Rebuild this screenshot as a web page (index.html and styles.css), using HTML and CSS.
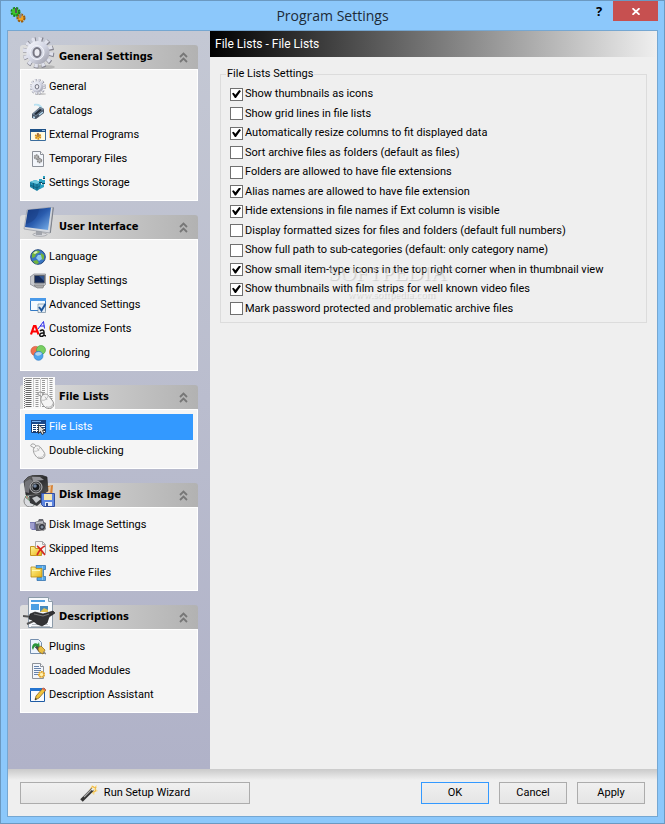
FILE: index.html
```html
<!DOCTYPE html>
<html lang="en">
<head>
  <meta charset="UTF-8">
  <meta name="viewport" content="width=device-width, initial-scale=1.0">
  <title>Program Settings</title>
  <link rel="stylesheet" href="styles.css">
</head>
<body>
  <svg class="defs" aria-hidden="true">
    <defs>
      <linearGradient id="silver" x1="0" y1="0" x2="1" y2="1">
        <stop offset="0" stop-color="#fafbff"/><stop offset="0.5" stop-color="#d3d6e4"/><stop offset="1" stop-color="#9696a2"/>
      </linearGradient>
      <linearGradient id="blue" x1="0" y1="0" x2="1" y2="1">
        <stop offset="0" stop-color="#0c2d72"/><stop offset="0.5" stop-color="#2a5cae"/><stop offset="1" stop-color="#7db4ee"/>
      </linearGradient>
      <linearGradient id="gold" x1="0" y1="0" x2="1" y2="1">
        <stop offset="0" stop-color="#fff79a"/><stop offset="1" stop-color="#e9b414"/>
      </linearGradient>
      <linearGradient id="black" x1="0" y1="0" x2="1" y2="1">
        <stop offset="0" stop-color="#777"/><stop offset="0.5" stop-color="#2c2c2e"/><stop offset="1" stop-color="#555"/>
      </linearGradient>
      <symbol id="gear" viewBox="0 0 32 32">
        <ellipse cx="21" cy="30" rx="11" ry="2" fill="#777" opacity="0.35"/>
        <circle cx="15.500" cy="15.700" r="13" fill="none" stroke="#84848f" stroke-width="5.500" stroke-dasharray="3.900 2.910"/>
        <circle cx="15" cy="15.200" r="13" fill="none" stroke="#dfe1ec" stroke-width="4.500" stroke-dasharray="3.300 3.510"/>
        <circle cx="15" cy="15.500" r="11.500" fill="url(#silver)"/>
        <circle cx="14" cy="15.500" r="7" fill="#d9dce8" stroke="#f3f4fa"/>
        <ellipse cx="14" cy="15.500" rx="3.500" ry="4.500" fill="#ececf2" stroke="#777783" stroke-width="2"/>
      </symbol>
      <symbol id="chevrons" viewBox="0 1 9 11">
        <path d="M1 6 4.500 2.500 8 6M1 11 4.500 7.500 8 11" fill="none" stroke="#777" stroke-width="1.800"/>
      </symbol>
      <symbol id="mouse" viewBox="0 0 16 16">
        <path d="M4 5C2 3 0 4 1 2s4-1 5 1" fill="none" stroke="#999" stroke-width="1"/>
        <path d="M4 5c2-3 5-3 7 0l3 4c3 5-2 8-6 6C5 13 2 8 4 5z" fill="#f4f4f4" stroke="#8b8b8b" stroke-width=".8"/>
        <path d="M4 8c3 1 5-1 6-4M7 5l2 3" fill="none" stroke="#aaa" stroke-width=".7"/>
        <path d="M8 14c3 1 6 0 6-3" fill="none" stroke="#bbb"/>
      </symbol>
      <symbol id="page" viewBox="0 0 16 16">
        <path d="M2.500.5h8l3 3v12h-11z" fill="#f3f6fb" stroke="#8c9199"/>
        <path d="M10.500.5v3h3" fill="#fff" stroke="#8c9199"/>
      </symbol>
    </defs>
  </svg>

  <div class="window">
    <header class="titlebar">
      <svg class="app-icon" viewBox="0 0 16 16">
        <circle cx="5.500" cy="5" r="3.800" fill="#35b52a" stroke="#178215" stroke-width="2.500" stroke-dasharray="2 1"/>
        <circle cx="5" cy="4.500" r="3" fill="#3fc62e"/>
        <path d="M5 1h2v5H5z" fill="#555"/>
        <circle cx="11" cy="11" r="3.300" fill="#e8961a" stroke="#9c5c0b" stroke-width="2.500" stroke-dasharray="2 1"/>
        <circle cx="11" cy="11" r="2.500" fill="#f0a426"/>
        <path d="M9 7h3l-1 4H9z" fill="#888"/>
      </svg>
      <h1>Program Settings</h1>
      <div class="window-buttons">
        <button class="help" type="button" aria-label="Help">?</button>
        <button class="close" type="button" aria-label="Close">
          <svg width="8" height="7" viewBox="0 0 8 7"><path d="M.5.2 7.500 6.800M7.500.2.5 6.800" stroke="#fff" stroke-width="1.800"/></svg>
        </button>
      </div>
    </header>

    <div class="client">
      <div class="panes">
        <nav class="sidebar">
          <section class="group">
            <button class="group-head" type="button">
              <svg class="group-icon" viewBox="0 0 32 32"><use href="#gear"/></svg>
              <span>General Settings</span>
              <svg class="chevrons"><use href="#chevrons"/></svg>
            </button>
            <ul>
              <li><a href="#"><svg viewBox="0 0 16 16"><use href="#gear"/></svg>General</a></li>
              <li><a href="#"><svg viewBox="0 0 16 16">
                <path d="M4 1c5-1 8 1 9 5l-3-1C9 3 7 2 4 3z" fill="#b9e1f1"/>
                <path d="M2 11 10 4l4 2v4l-8 6-4-1z" fill="#465263"/>
                <path d="m2 11 8-7 4 2-8 7z" fill="#76899d"/>
                <path d="m4 11 6-5 2 1-6 5z" fill="#202a36"/>
                <path d="m3 14 2 .500M9 12l4-3" stroke="#b5d9ef" stroke-width="1.500"/>
              </svg>Catalogs</a></li>
              <li><a href="#"><svg viewBox="0 0 16 16">
                <path d="M.5 2.500h15v11H.5z" fill="#fffbe0" stroke="#3a6c9c"/>
                <path d="M0 2h16v3H0z" fill="#1d5187"/>
                <path d="M12 3.500h3" stroke="#9cc5ea"/>
                <circle cx="8" cy="9.500" r="2.300" fill="#f4c542" stroke="#d18c1b" stroke-width="2" stroke-dasharray="1.500 .7"/>
                <path d="M8 6v4" stroke="#744"/>
              </svg>External Programs</a></li>
              <li><a href="#"><svg viewBox="0 0 16 16">
                <use href="#page"/>
                <circle cx="6.500" cy="6" r="2" fill="#bbb" stroke="#888" stroke-width="1.500" stroke-dasharray="1.500 .5"/>
                <circle cx="9.500" cy="9.500" r="2" fill="#bbb" stroke="#888" stroke-width="1.500" stroke-dasharray="1.500 .5"/>
              </svg>Temporary Files</a></li>
              <li><a href="#"><svg viewBox="0 0 16 16">
                <path d="m0 7 5-2 6 2v6l-4 3-7-4z" fill="#1c86aa"/>
                <path d="m0 7 5-2 6 2-4 2z" fill="#6ec9df"/>
                <path d="M7 9v6M3.500 8v6M0 10l7 3 4-3" fill="none" stroke="#0b5673" stroke-width=".7"/>
                <path d="M9 4h3v3H9zM13 1h2v2h-2zM12 5h3v3h-3zM10 10l4-1v3l-4 2z" fill="#29a1c1"/>
                <path d="M13 3h2v1h-2zM9 7h3v1H9zM12 8h3v1h-3z" fill="#0b465f"/>
              </svg>Settings Storage</a></li>
            </ul>
          </section>

          <section class="group">
            <button class="group-head" type="button">
              <svg class="group-icon" viewBox="0 0 32 32">
                <ellipse cx="17" cy="27.500" rx="7" ry="1.800" fill="#d9dade" stroke="#8e9096" stroke-width=".6"/>
                <path d="m13 23 6 1v4h-6z" fill="#a1a4ab"/>
                <path d="m4 3 26-3-3 26L1 22z" fill="#d5d8de" stroke="#8a8e98" stroke-width=".6"/>
                <path d="m5 3 23-2.500L25 23 2 20z" fill="url(#blue)"/>
                <path d="M5 3 16 2C15 10 11 15 3 17z" fill="#1c438b" opacity=".6"/>
                <path d="m30 0 .8 1-3 25-.8-.5z" fill="#777b84"/>
              </svg>
              <span>User Interface</span>
              <svg class="chevrons"><use href="#chevrons"/></svg>
            </button>
            <ul>
              <li><a href="#"><svg viewBox="0 0 16 16">
                <circle cx="8" cy="8" r="7.300" fill="#3975c2" stroke="#23487e"/>
                <path d="M2 5c2-4 6-4 8-3l-1 2-3 1-1 3-3 1zM11 4l3 2v4l-2 1-2-3zM3 12l4-1 2 3-2 1c-2 0-3-1-4-3z" fill="#72b43b"/>
                <path d="m3 4 3-2 2 1-3 2z" fill="#e1f3bd"/>
                <path d="M8 6h3l1 4-3 2-3-3z" fill="#8cc8f2"/>
              </svg>Language</a></li>
              <li><a href="#"><svg viewBox="0 0 16 16">
                <path d="m0 4 4-3h11.500v10.500l-3 2.500H5L0 11z" fill="#c6c8cc" stroke="#7c7f86" stroke-width=".7"/>
                <path d="M4.500 2.500h10V10h-10z" fill="#142a59" stroke="#60656e"/>
                <path d="m9 3 5 0v5z" fill="#31558f"/>
                <path d="m4 12 10 0-1 3H7z" fill="#aaa" stroke="#777" stroke-width=".6"/>
              </svg>Display Settings</a></li>
              <li><a href="#"><svg viewBox="0 0 16 16">
                <path d="M.5 1.500h15v12H.5z" fill="#f5faff" stroke="#3379c4"/>
                <path d="M0 1h16v3H0z" fill="#4a9ae9"/>
                <path d="M8 7h7.500v8.500H8z" fill="#e5edf5" stroke="#71899e" stroke-width=".7"/>
                <path d="m9 10 2.500 3.500L15.500 7" fill="none" stroke="#1c559a" stroke-width="2"/>
              </svg>Advanced Settings</a></li>
              <li><a href="#"><svg viewBox="0 0 16 16">
                <path d="M1 13.500 4 5h1.500l3 8.500M2.500 10.500h5" fill="none" stroke="#f00" stroke-width="2.200"/>
                <path d="m8 8 5.500-7.500 1 7M10 5h4.500" fill="none" stroke="#2929ea" stroke-width="1"/>
                <path d="M10 10c2-2 4-1 4 1v4M14 12c-6-1-5 5-1 3l1-1 2 1" fill="none" stroke="#111" stroke-width="1.500"/>
              </svg>Customize Fonts</a></li>
              <li><a href="#"><svg viewBox="0 0 16 16">
                <circle cx="5.500" cy="6" r="4.600" fill="#ef704d" stroke="#c84c30" stroke-width=".6"/>
                <circle cx="11" cy="5" r="4.500" fill="#79cf62" stroke="#43a43a" stroke-width=".6"/>
                <circle cx="8.500" cy="10.800" r="4.500" fill="#4da5ed" stroke="#2472c1" stroke-width=".6"/>
                <path d="M5 9c1-2 4-3 7-1-1 3-5 4-7 1z" fill="#b2d5ee"/>
              </svg>Coloring</a></li>
            </ul>
          </section>

          <section class="group">
            <button class="group-head" type="button">
              <svg class="group-icon" viewBox="0 0 32 32">
                <path d="M0 0h32v32H0z" fill="#fafafa"/>
                <path d="M2 1.500h28" stroke="#999" stroke-dasharray="7 1"/>
                <path d="M5.500 3v27" stroke="#666" stroke-width="6" stroke-dasharray="1 1"/>
                <path d="M14 3v27M20.500 3v27M28 3v27" stroke="#999" stroke-width="3" stroke-dasharray="1 1"/>
                <path d="M10.500 2v28M17.500 2v28M24.500 2v28" stroke="#ccc"/>
                <path d="M1.500 2v29" stroke="#777" stroke-dasharray="1 1"/>
                <svg x="14" y="14" width="18" height="18"><use href="#mouse"/></svg>
              </svg>
              <span>File Lists</span>
              <svg class="chevrons"><use href="#chevrons"/></svg>
            </button>
            <ul>
              <li><a class="selected" href="#" aria-current="page"><svg viewBox="0 0 16 16">
                <path d="M1.500 1.500h14v12h-14z" fill="#fff" stroke="#163b76"/>
                <path d="M1 1h15v4H1z" fill="#1a4788"/>
                <path d="M2 2.500h9" stroke="#78b1f1"/>
                <path d="M3 6.500h3m1 0h8M3 8.500h3m1 0h8M3 10.500h3m1 0h8M3 12.500h3m1 0h4" stroke="#183d72"/>
                <path d="M8.500 5.500v9l2-2 1.500 3 2-1-1.500-3h2.500z" fill="#ddd" stroke="#222" stroke-width=".8"/>
              </svg>File Lists</a></li>
              <li><a href="#"><svg viewBox="0 0 16 16"><use href="#mouse"/></svg>Double-clicking</a></li>
            </ul>
          </section>

          <section class="group">
            <button class="group-head" type="button">
              <svg class="group-icon" viewBox="0 0 32 32">
                <circle cx="7" cy="26" r="6" fill="#dadce0" stroke="#888"/>
                <path d="M7 26 2 22l2-2zM7 26l5 4" stroke="#6a9b76" fill="#dc8888"/>
                <path d="m20 12 10-2-1 12-10 1z" fill="#d98436"/>
                <path d="m22 13 6-2-1 8-5 1z" fill="#eac39a"/>
                <path d="M1 6 5 2l6-2h7l6 2 1 14-5 3-17 1z" fill="url(#black)" stroke="#222" stroke-width=".6"/>
                <path d="m2 7 5-3 3 2-3 3-1 9-4-1z" fill="#747478"/>
                <path d="m9 2 8 0 4 3-11 1z" fill="#949499"/>
                <circle cx="13" cy="12" r="6" fill="#494a4e" stroke="#b7b7ba"/>
                <circle cx="13" cy="12" r="4" fill="#17191d" stroke="#88898c"/>
                <circle cx="12" cy="11" r="1.800" fill="#6f819d"/>
                <path d="m6 21 12-2 3 6-7 6-7-3z" fill="#36373a"/>
                <path d="m9 23 5-2 4 3-5 4z" fill="#c3c6ca"/>
                <path d="M18.500 18.500h13v13h-11l-2-2z" fill="#5c85df" stroke="#344e9d"/>
                <path d="M21 19h8v6h-8z" fill="#f5e6ae"/>
                <path d="M22 27h7v4h-7z" fill="#e6eaf4"/><path d="M23 28h2v3h-2z" fill="#314c8d"/>
              </svg>
              <span>Disk Image</span>
              <svg class="chevrons"><use href="#chevrons"/></svg>
            </button>
            <ul>
              <li><a href="#"><svg viewBox="0 0 16 16">
                <path d="M0 5h6v8H2l-2-2z" fill="#7677b0"/><path d="M1 6v6M3 6v6" stroke="#c7c6e9"/>
                <path d="m5 5 3-1 1-2h4l1 3 2 1v6l-3 2H6z" fill="#66676f"/>
                <path d="m6 5 7-1v2L6 7z" fill="#bbbcc2"/>
                <circle cx="12" cy="10" r="3.600" fill="#363841" stroke="#aaa"/><circle cx="12" cy="10" r="1.500" fill="#8693a3"/>
              </svg>Disk Image Settings</a></li>
              <li><a href="#"><svg viewBox="0 0 16 16">
                <path d="M5.500.5h7l3 3v9h-10z" fill="#f4f4f4" stroke="#aaa"/>
                <path d="M12.500.5v3h3" fill="none" stroke="#aaa"/>
                <path d="M.5 14.500v-9h4l1 2h6v7z" fill="url(#gold)" stroke="#c39622"/>
                <path d="M7 14c2-4 5-8 8-9M7 5c2 1 5 5 8 9" fill="none" stroke="#d62922" stroke-width="1.700"/>
              </svg>Skipped Items</a></li>
              <li><a href="#"><svg viewBox="0 0 16 16">
                <path d="M6 .5h9.500v4h-2v7h2v4H7v-3h4V4H6z" fill="#54a7e7" stroke="#2869a7" stroke-width=".7"/>
                <path d="M12.500 1v14" stroke="#8cc7f5"/>
                <path d="M1 2h4l1 1.500h6V12H1z" fill="url(#gold)" stroke="#b68a13" stroke-width=".8"/>
                <path d="M2 5.500h8" stroke="#fff9b6"/>
              </svg>Archive Files</a></li>
            </ul>
          </section>

          <section class="group">
            <button class="group-head" type="button">
              <svg class="group-icon" viewBox="0 0 32 32">
                <path d="M5.500.5h20l4 4v26h-24z" fill="#f8fafd" stroke="#8c9ba9"/>
                <path d="M25.500.5v4h4" fill="#dce4ec" stroke="#8c9ba9"/>
                <path d="M8 3h14v2H8zM8 7h8v6H8z" fill="#4b9ee3"/>
                <path d="M17 9h8v6h-8z" fill="#4688bb"/><path d="m17 15 4-4 4 2v2z" fill="#e2c04d"/>
                <path d="M9 27.500h16M8 29.500h19" stroke="#b7bdc3"/>
                <path d="m0 19 9 1m-5 7 9-4" stroke="#555" stroke-width="2"/>
                <path d="m7 17 5-2 8 2 10-3 2 2-6 4-2 6-5 3-5-2-5-4-3-1z" fill="#333335" stroke="#111" stroke-width=".6"/>
                <path d="m11 17 9 2 6-2" fill="none" stroke="#777" stroke-width="1.200"/>
              </svg>
              <span>Descriptions</span>
              <svg class="chevrons"><use href="#chevrons"/></svg>
            </button>
            <ul>
              <li><a href="#"><svg viewBox="0 0 16 16">
                <path d="M.5.5h8l3 3v11H.5z" fill="#edf4fd" stroke="#758fae"/>
                <path d="M2 9c0-4 3-6 6-4l1-2 1 6-5 0 1-2c-1 0-2 1-3 4z" fill="#2a963b"/>
                <path d="m5 8 2-1 4 3 4 4-2 1-5-3z" fill="#48484d"/>
                <path d="m9 8 2-1 4 4-2 4-4-2-1-3z" fill="#e9be43" stroke="#8b6517" stroke-width=".7"/>
                <path d="m13 13 3 2" stroke="#888" stroke-width="1.500"/>
              </svg>Plugins</a></li>
              <li><a href="#"><svg viewBox="0 0 16 16">
                <use href="#page"/>
                <path d="M4 3.500h5M4 5.500h7M4 7.500h7M4 9.500h5M4 11.500h4" stroke="#6682ab"/>
                <circle cx="11.500" cy="11.500" r="2.600" fill="#fff2b3" stroke="#e3a329" stroke-width="2" stroke-dasharray="1.700 .6"/>
              </svg>Loaded Modules</a></li>
              <li><a href="#"><svg viewBox="0 0 16 16">
                <path d="M.5 1.500h14v13H.5z" fill="#f9fcff" stroke="#1f5ba4"/>
                <path d="M0 1h15v3H0z" fill="#2474cf"/>
                <path d="m5 13 1-4 7-8 3 2-7 8z" fill="#f1c33b" stroke="#75561b" stroke-width=".7"/>
                <path d="m12 2 1-1.500 3 2-1 1.500z" fill="#dd684f"/><path d="m5 13 .5-2 1.500 1z" fill="#222"/>
              </svg>Description Assistant</a></li>
            </ul>
          </section>
        </nav>

        <main class="content">
          <h2>File Lists - File Lists</h2>
          <fieldset>
            <legend>File Lists Settings</legend>
            <div class="options">
              <label><input type="checkbox" checked>Show thumbnails as icons</label>
              <label><input type="checkbox">Show grid lines in file lists</label>
              <label><input type="checkbox" checked>Automatically resize columns to fit displayed data</label>
              <label><input type="checkbox">Sort archive files as folders (default as files)</label>
              <label><input type="checkbox">Folders are allowed to have file extensions</label>
              <label><input type="checkbox" checked>Alias names are allowed to have file extension</label>
              <label><input type="checkbox" checked>Hide extensions in file names if Ext column is visible</label>
              <label><input type="checkbox">Display formatted sizes for files and folders (default full numbers)</label>
              <label><input type="checkbox">Show full path to sub-categories (default: only category name)</label>
              <label><input type="checkbox" checked>Show small item-type icons in the top right corner when in thumbnail view</label>
              <label><input type="checkbox" checked>Show thumbnails with film strips for well known video files</label>
              <label><input type="checkbox">Mark password protected and problematic archive files</label>
            </div>
            <div class="watermark">
              <strong>SOFTPEDIA<sup>™</sup></strong>
              <span>www.softpedia.com</span>
            </div>
          </fieldset>
        </main>
      </div>

      <footer class="actions">
        <button class="wizard" type="button">
          <svg width="18" height="17" viewBox="0 0 18 17">
            <path d="m12 0 2 2 3-2-1 4 2 2-3 1-1 3-3-3-3 0 2-3z" fill="#ffd767" opacity=".75"/>
            <path d="m13 1 1 2 2-1-1 3 1 1-3 1-3-2z" fill="#fff2b4" stroke="#e9a72d" stroke-width=".7"/>
            <path d="M1.500 15.500 13 4" stroke="#333" stroke-width="3.500"/>
            <path d="M4 12 12 4" stroke="#aaa" stroke-width="1.200"/>
            <path d="m11 4 2-1 1 2-1 1z" fill="#f5f5f5"/>
          </svg>
          Run Setup Wizard
        </button>
        <button class="ok" type="button">OK</button>
        <button type="button">Cancel</button>
        <button type="button">Apply</button>
      </footer>
    </div>
  </div>
</body>
</html>
```
FILE: styles.css
```css
* {
  box-sizing: border-box;
}

body {
  margin: 0;
  font-family: Roboto, sans-serif;
  font-size: 11px;
  line-height: 14px;
  color: #000;
}

button {
  font: inherit;
  color: inherit;
}

.defs {
  position: absolute;
  width: 0;
  height: 0;
}

.window {
  display: flex;
  flex-direction: column;
  min-height: 100vh;
  padding: 0 6px 6px;
  background: #8cc8fb;
  border: 1px solid #6b99c1;
}

.titlebar {
  display: grid;
  grid-template-columns: 1fr auto 1fr;
  height: 29px;
}

.app-icon {
  width: 16px;
  height: 16px;
  margin: 6px 3px;
}

.titlebar h1 {
  margin: 0;
  font: 14px/29px "Open Sans", sans-serif;
  color: #1d2b38;
}

.window-buttons {
  display: flex;
  justify-content: flex-end;
  height: 20px;
}

.window-buttons button {
  padding: 0;
  border: 0;
}

.help {
  width: 28px;
  background: none;
  font-family: "Noto Sans", sans-serif;
  font-size: 13px;
  font-weight: bold;
}

.close {
  display: flex;
  align-items: center;
  justify-content: center;
  width: 45px;
  background: #c75050;
}

.client {
  display: flex;
  flex: 1;
  flex-direction: column;
  background: #efefef;
  border: 1px solid #75a7d2;
}

.panes {
  display: flex;
  flex: 1;
}

.sidebar {
  display: flex;
  flex: none;
  flex-direction: column;
  gap: 14px;
  width: 202px;
  padding: 14px 12px;
  background: linear-gradient(#c4c8d4, #b0b2c8);
}

.group-head {
  position: relative;
  display: flex;
  align-items: center;
  justify-content: space-between;
  width: 100%;
  height: 24px;
  padding: 0 10px 0 39px;
  border: 0;
  border-radius: 3px 3px 0 0;
  background: linear-gradient(to right, #dedede, #b2b2b2);
  font-family: "DejaVu Sans Condensed", "DejaVu Sans", sans-serif;
  font-stretch: condensed;
  font-weight: bold;
}

.group-icon {
  position: absolute;
  left: 3px;
  bottom: 0;
  width: 32px;
  height: 32px;
}

.chevrons {
  width: 9px;
  height: 11px;
}

.group ul {
  margin: 0;
  padding: 5px 4px;
  list-style: none;
  background: #f5f5f5;
  border: 1px solid #fff;
}

.group a {
  display: flex;
  align-items: center;
  gap: 3px;
  height: 24px;
  padding: 0 5px;
  color: #000;
  text-decoration: none;
}

.group a svg {
  width: 16px;
  height: 16px;
}

.group a.selected {
  color: #fff;
  background: #3399ff;
  box-shadow: 0 1px #3399ff, 0 -1px #3399ff;
}

.content {
  flex: 1;
  min-width: 0;
}

.content h2 {
  margin: 0;
  padding: 0 5px;
  font-size: 12px;
  font-weight: normal;
  line-height: 26px;
  color: #fff;
  background: linear-gradient(to right, #000, #efefef);
}

fieldset {
  position: relative;
  margin: 10px 10px 0;
  padding: 3px 9px 4px;
  border: 1px solid #dcdcdc;
}

legend {
  margin-left: -4px;
  padding: 0 1px;
}

.options {
  display: grid;
  grid-auto-rows: 20px 19px;
}

.options label {
  display: flex;
  align-items: center;
  gap: 2px;
  white-space: nowrap;
}

.options input {
  appearance: none;
  display: grid;
  place-items: center;
  width: 13px;
  height: 13px;
  margin: 0;
  background: #fff;
  border: 1px solid #707070;
}

.options input:checked::after {
  content: "";
  width: 9px;
  height: 8px;
  background: #000;
  clip-path: polygon(0 45%, 18% 35%, 38% 60%, 80% 0, 100% 12%, 44% 100%, 32% 100%);
}

.watermark {
  position: absolute;
  top: 178px;
  left: 107px;
  display: flex;
  flex-direction: column;
  align-items: center;
  font-family: "Liberation Serif", serif;
  color: rgba(255, 255, 255, 0.5);
  text-shadow: 1px 1px 1px rgba(0, 0, 0, 0.15);
  pointer-events: none;
}

.watermark strong {
  font-size: 22px;
  font-weight: normal;
  line-height: 28px;
}

.watermark sup {
  font-size: 8px;
  line-height: 0;
}

.actions {
  display: flex;
  gap: 10px;
  padding: 13px 12px 12px;
  background: linear-gradient(#cacaca, #efefef 11px);
}

.actions button {
  display: flex;
  align-items: center;
  justify-content: center;
  gap: 6px;
  width: 68px;
  height: 22px;
  padding: 0;
  background: linear-gradient(#f0f0f0, #e5e5e5);
  border: 1px solid #acacac;
}

.actions .wizard {
  width: 230px;
  margin-right: auto;
}

.actions .ok {
  border-color: #3399ff;
}
```
